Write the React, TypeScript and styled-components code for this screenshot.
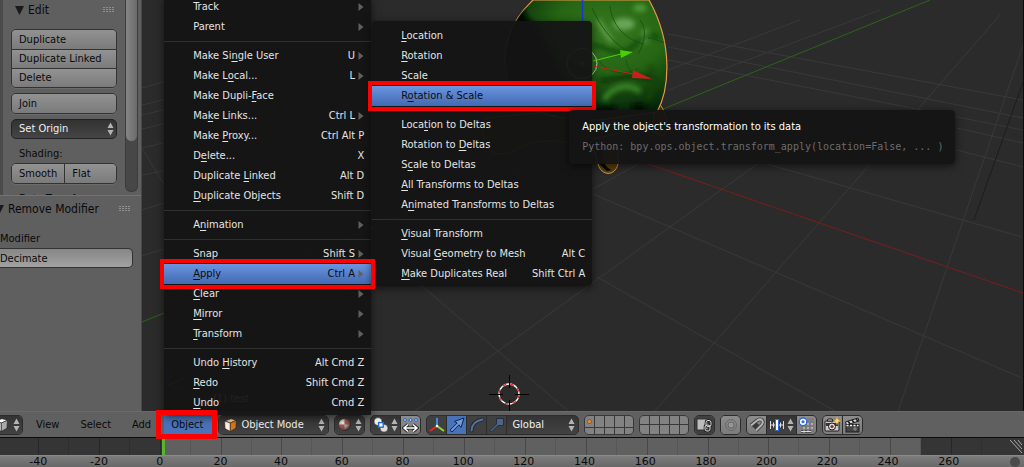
import React from "react";
import styled, { createGlobalStyle, css } from "styled-components";

const Global = createGlobalStyle`
  * { box-sizing: border-box; }
  body { margin: 0; background: #2b2b2b; }
  body, button, input, select {
    font-family: "DejaVu Sans Condensed", "DejaVu Sans", sans-serif;
    font-size: 11px;
    line-height: 14px;
  }
  button, input, select { margin: 0; padding: 0; border: 0; background: none; color: inherit; }
  svg { display: block; flex: none; }
`;

/* ---------- page frame ---------- */

const Page = styled.div`
  display: flex;
  flex-direction: column;
  min-height: 100vh;
  overflow: hidden;
`;

const Workspace = styled.div`
  flex: 1;
  display: flex;
  background: #2b2b2b;
`;

const Viewport = styled.main`
  flex: 1;
  position: relative;
  overflow: hidden;
  border-right: 1px solid #0c0c0c;
`;

const Scene = styled.svg`
  position: absolute;
  inset: 0;
  width: 100%;
  height: 100%;
`;

/* ---------- tool shelf ---------- */

const Shelf = styled.aside`
  width: 142px;
  display: flex;
  flex-direction: column;
  background: #5f5f5f;
  border-right: 1px solid #484848;
  color: #0a0a0a;
`;

const ShelfTop = styled.div`
  height: 195px;
  display: flex;
  overflow: hidden;
  border-left: 3px solid #4b4b4b;
`;

const ToolPanel = styled.section`
  flex: 1;
  padding: 2px 8px 0;
`;

const PanelTitle = styled.h2<{ $flush?: boolean }>`
  display: flex;
  align-items: center;
  gap: 4px;
  height: 16px;
  margin: 0;
  padding: ${(p) => (p.$flush ? "0 10px 0 0" : "0 2px 0 4px")};
  font-size: 12px;
  font-weight: 400;
  span { flex: 1; }
`;

const ButtonStack = styled.div<{ $row?: boolean }>`
  display: flex;
  flex-direction: ${(p) => (p.$row ? "row" : "column")};
  border: 1px solid #333;
  border-radius: 5px;
  overflow: hidden;
  box-shadow: 0 1px 0 #6c6c6c;
`;

const ToolButton = styled.button<{ $divided?: boolean }>`
  flex: 1;
  min-height: 19px;
  padding: 0 7px;
  text-align: left;
  background: linear-gradient(#929292, #7b7b7b);
  ${ButtonStack} > & + & {
    ${(p) => (p.$divided ? "border-left" : "border-top")}: 1px solid #333;
  }
`;

const ToolList = styled.div`
  display: flex;
  flex-direction: column;
  gap: 5px;
  padding-top: 11px;
`;

const MenuButton = styled.button`
  display: flex;
  align-items: center;
  justify-content: space-between;
  height: 20px;
  padding: 0 2px 0 7px;
  border: 1px solid #222;
  border-radius: 5px;
  background: linear-gradient(#323232, #454545);
  color: #f0f0f0;
`;

const Caption = styled.div`
  padding: 1px 8px 0;
  line-height: 18px;
`;

const Track = styled.div`
  width: 13px;
  height: 192px;
  margin-right: 3px;
  border: 1px solid #3c3c3c;
  border-top: 0;
  border-radius: 0 0 6px 6px;
  background: #474747;
`;

const Thumb = styled.div`
  height: 141px;
  border-radius: 0 0 6px 6px;
  background: linear-gradient(90deg, #858585, #6b6b6b);
`;

const ShelfBottom = styled.section`
  flex: 1;
  padding-top: 5px;
  border-top: 1px solid #747474;
`;

const Field = styled.label`
  display: block;
  margin-top: 13px;
  line-height: 18px;
`;

const TextInput = styled.input`
  display: block;
  width: 133px;
  height: 20px;
  border: 1px solid #333;
  border-left: 0;
  border-radius: 0 5px 5px 0;
  background: linear-gradient(#868686, #a2a2a2);
`;

/* ---------- header ---------- */

const Header = styled.header`
  position: relative;
  z-index: 2;
  display: flex;
  align-items: center;
  gap: 5px;
  height: 27px;
  border-top: 1px solid #6a6a6a;
  border-bottom: 1px solid #0c0c0c;
  background: #606060;
  color: #0a0a0a;
`;

const MenuBar = styled.nav`
  display: flex;
  gap: 5px;
  margin-right: 1px;
`;

const MenuAnchor = styled.div`
  position: relative;
  &::after {
    content: "";
    position: absolute;
    inset: -5px -5px -4px -8px;
    border: 5px solid #fe0000;
    pointer-events: none;
  }
`;

const BarButton = styled.button<{ $open?: boolean }>`
  display: block;
  height: 20px;
  padding: ${(p) => (p.$open ? "0 9px 0 7px" : "0 8px")};
  background: ${(p) => (p.$open ? "#4a72b8" : "none")};
`;

const Group = styled.div<{ $clipped?: boolean }>`
  display: flex;
  height: 20px;
  overflow: hidden;
  border: 1px solid #2c2c2c;
  border-radius: 5px;
  background: #2c2c2c;
  gap: 1px;
  ${(p) => p.$clipped && css`
    width: 23px;
    justify-content: flex-end;
    border-left: 0;
    border-radius: 0 5px 5px 0;
  `}
`;

const tones = {
  dark: "linear-gradient(#343434, #424242)",
  light: "linear-gradient(#8c8c8c, #7c7c7c)",
  flat: "#404040",
  active: "#4a72b8",
};

const IconButton = styled.button<{ $tone?: keyof typeof tones; $wide?: boolean }>`
  display: flex;
  flex: none;
  align-items: center;
  justify-content: ${(p) => (p.$wide ? "space-between" : "center")};
  width: ${(p) => (p.$wide ? "29px" : "19px")};
  padding: ${(p) => (p.$wide ? "0 2px" : "0")};
  background: ${(p) => tones[p.$tone ?? "dark"]};
`;

const SelectBox = styled.label<{ $width: number }>`
  display: flex;
  align-items: center;
  gap: 4px;
  width: ${(p) => p.$width}px;
  padding: 0 3px 0 5px;
  background: ${tones.dark};
  color: #f0f0f0;
`;

const Select = styled.select`
  appearance: none;
  flex: 1;
  min-width: 0;
  height: 18px;
`;

const Layers = styled.div`
  display: grid;
  grid-template-columns: repeat(5, 1fr);
  gap: 1px;
  width: 50px;
  height: 20px;
  overflow: hidden;
  border: 1px solid #383838;
  border-radius: 5px;
  background: #383838;
`;

const Layer = styled.button`
  display: flex;
  align-items: center;
  justify-content: center;
  background: #828282;
`;

/* ---------- menus ---------- */

const panel = css`
  position: absolute;
  background: rgba(20, 20, 20, 0.95);
  color: #e4e4e4;
  box-shadow: 0 2px 8px rgba(0, 0, 0, 0.6);
`;

const Menu = styled.div`
  ${panel}
  left: 0;
  bottom: 100%;
  width: 207px;
  padding-bottom: 2px;
`;

const SubMenu = styled.div`
  ${panel}
  left: calc(100% + 1px);
  bottom: -2px;
  width: 220px;
  padding: 5px 0 2px;
  border-radius: 4px;
`;

const Row = styled.div<{ $marked?: boolean }>`
  position: relative;
  ${(p) => p.$marked && css`
    z-index: 1;
    &::after {
      content: "";
      position: absolute;
      inset: -5px -4px;
      border: 4px solid #fe0000;
      pointer-events: none;
    }
  `}
`;

const MenuItem = styled.button<{ $active?: boolean }>`
  display: flex;
  align-items: center;
  width: 100%;
  height: 20px;
  padding: 0 7px 0 29px;
  white-space: nowrap;
  color: ${(p) => (p.$active ? "#0c0c0c" : "inherit")};
  background: ${(p) => (p.$active ? "linear-gradient(#6b95df, #4269b2)" : "none")};
  u {
    text-decoration-thickness: 1px;
    text-underline-offset: 2px;
    text-decoration-skip-ink: none;
  }
`;

const Shortcut = styled.span`
  margin-left: auto;
`;

const Divider = styled.hr`
  margin: 4px 0;
  border: 0;
  border-top: 1px solid #303030;
`;

const Tooltip = styled.div`
  ${panel}
  z-index: 2;
  left: 197px;
  top: 24px;
  width: 386px;
  padding: 7px 13px;
  border-radius: 4px;
  color: #fff;
  line-height: 20px;
  white-space: nowrap;
`;

const Code = styled.code`
  display: block;
  font-family: "DejaVu Sans Mono", monospace;
  font-size: 10px;
  line-height: 20px;
  color: #6c6c6c;
`;

/* ---------- timeline ---------- */

const Timeline = styled.footer`
  position: relative;
`;

const Graph = styled.div`
  display: grid;
  grid-template-columns: repeat(16, 1fr);
  height: 17px;
  padding: 0 42px 0 8px;
  background: linear-gradient(90deg, #353535 0 15.9%, #606060 15.9% 89.9%, #353535 89.9%);
`;

const Tick = styled.div`
  display: flex;
  border-right: 1px solid rgba(0, 0, 0, 0.1);
  &::before {
    content: "";
    width: 50%;
    border-right: 1px solid rgba(0, 0, 0, 0.25);
  }
`;

const Playhead = styled.div`
  position: absolute;
  left: 15.8%;
  top: 0;
  width: 3px;
  height: 17px;
  background: #55b52c;
`;

const Corner = styled.svg`
  position: absolute;
  right: 2px;
  top: 1px;
`;

const Ruler = styled.div`
  display: grid;
  grid-template-columns: repeat(16, 1fr);
  height: 12px;
  padding: 0 45px 0 8px;
  border-top: 1px solid #8a8a8a;
  background: linear-gradient(#7c7c7c, #686868);
  color: #0a0a0a;
  font-family: "DejaVu Sans", sans-serif;
  line-height: 11px;
  text-align: center;
`;

const RulerKnob = styled.div`
  position: absolute;
  right: 4px;
  bottom: 0;
  width: 10px;
  height: 10px;
  border-radius: 50%;
  background: #4a4a4a;
`;

/* ---------- icons ---------- */

const Arrows = () => (
  <svg width="7" height="14" viewBox="0 0 7 14" fill="#b4b4b4">
    <path d="M3.5 .5 6.5 6H.5zM3.5 13.5.5 8h6z" />
  </svg>
);

const Grip = () => (
  <svg width="12" height="6" viewBox="0 0 12 6">
    {[0, 3, 6, 9].map((x) => [0, 2, 4].map((y) => (
      <rect key={`${x}-${y}`} x={x} y={y} width="2" height="1" fill="#8f8f8f" />
    )))}
  </svg>
);

const Fold = () => (
  <svg width="9" height="9" viewBox="0 0 9 9"><path d="M0 0h9L4.5 9z" fill="#1a1a1a" /></svg>
);

const FoldHalf = () => (
  <svg width="4" height="9" viewBox="5 0 4 9"><path d="M0 0h9L4.5 9z" fill="#1a1a1a" /></svg>
);

const SubArrow = () => (
  <svg width="6" height="8" viewBox="0 0 6 8"><path d="M.5 0 5.5 4 .5 8z" fill="#606060" /></svg>
);

const Cube = ({ top, left, right }: { top: string; left: string; right: string }) => (
  <svg width="13" height="14" viewBox="0 0 13 14" stroke="#222" strokeWidth=".6" strokeLinejoin="round">
    <path d="M.6 3 7 .7l5.4 1.6L6.3 5z" fill={top} />
    <path d="M.6 3l5.7 2v8.4L1 10.6z" fill={left} />
    <path d="M6.3 5l6.1-2.7-.5 8-5.6 3.1z" fill={right} />
  </svg>
);

const Shading = () => (
  <svg width="15" height="15" viewBox="0 0 15 15">
    <defs>
      <radialGradient id="ball" cx=".35" cy=".35" r=".75">
        <stop offset="0" stopColor="#f4eeee" /><stop offset=".45" stopColor="#b9a39e" /><stop offset="1" stopColor="#3a2624" />
      </radialGradient>
    </defs>
    <circle cx="7.5" cy="7.5" r="6" fill="url(#ball)" stroke="#1c1c1c" strokeWidth=".6" />
    <path d="M7.500 1.500a6 6 0 0 1 6 6h-6zM7.500 7.500v6a6 6 0 0 1-6-6z" fill="#7c342c" opacity=".7" />
  </svg>
);

const Pivot = () => (
  <svg width="16" height="16" viewBox="0 0 16 16" stroke="#222" strokeWidth=".6">
    <circle cx="5" cy="4.6" r="4" fill="#eee" />
    <circle cx="11" cy="11.2" r="4" fill="#ddd" />
    <rect x="5.6" y="5.6" width="4.6" height="4.6" fill="#fff" stroke="#2469d8" strokeWidth="1.4" />
  </svg>
);

const PivotCenters = () => (
  <svg width="17" height="16" viewBox="0 0 17 16" fill="none">
    <path d="M3 1v4M1 3h4M8.500 1v4M6.500 3h4M14 1v4M12 3h4" stroke="#3c6fc4" strokeWidth="1.800" />
    <circle cx="3" cy="3" r=".7" fill="#fff" /><circle cx="8.500" cy="3" r=".7" fill="#fff" /><circle cx="14" cy="3" r=".7" fill="#fff" />
    <path d="M2 11h13M6 7.500 2 11l4 3.500M11 7.500l4 3.500-4 3.500" stroke="#222" strokeWidth="3.200" />
    <path d="M2 11h13M6 7.500 2 11l4 3.500M11 7.500l4 3.500-4 3.500" stroke="#fff" strokeWidth="1.500" />
  </svg>
);

const Axes = () => (
  <svg width="16" height="16" viewBox="0 0 16 16" fill="none" strokeWidth="2">
    <path d="M8 9V1" stroke="#3d8ee0" /><path d="M8 9 1 14" stroke="#e2281c" /><path d="M8 9l7 5" stroke="#9ad42a" />
    <circle cx="8" cy="9" r="1.300" fill="#fff" />
  </svg>
);

const Translate = () => (
  <svg width="16" height="16" viewBox="0 0 16 16">
    <path d="M1 13.200 8.200 6 5.500 4.400 15 1 12 10.500 10 7.800 3 15z" fill="#6f9be6" stroke="#142544" strokeLinejoin="round" />
  </svg>
);

const Rotate = () => (
  <svg width="16" height="16" viewBox="0 0 16 16" fill="none" strokeLinecap="round">
    <path d="M2.500 13.500C3 7 7 3.500 13.500 2.500" stroke="#1e2a3e" strokeWidth="4" />
    <path d="M2.500 13.500C3 7 7 3.500 13.500 2.500" stroke="#5a7299" strokeWidth="2" />
  </svg>
);

const Scale = () => (
  <svg width="16" height="16" viewBox="0 0 16 16">
    <path d="M1 13.500 7.500 7V1.500h7v7H9L2.500 15z" fill="#4e658a" stroke="#202c40" />
  </svg>
);

const LockView = () => (
  <svg width="17" height="16" viewBox="0 0 17 16" fill="none">
    <rect x="1" y="2" width="11" height="11" fill="#bdbdbd" stroke="#333" />
    <rect x="10" y="3.500" width="5" height="6" rx="2" stroke="#222" strokeWidth="2.600" />
    <rect x="9" y="8" width="5" height="6" rx="2" stroke="#222" strokeWidth="2.600" />
    <rect x="10" y="3.500" width="5" height="6" rx="2" stroke="#ddd" />
    <rect x="9" y="8" width="5" height="6" rx="2" stroke="#ddd" />
  </svg>
);

const Proportional = () => (
  <svg width="14" height="14" viewBox="0 0 14 14" fill="none">
    <circle cx="7" cy="7" r="5.500" stroke="#6a6a6a" /><circle cx="7" cy="7" r="3" fill="#979797" stroke="#666" />
  </svg>
);

const Magnet = () => (
  <svg width="16" height="16" viewBox="0 0 16 16" fill="none">
    <path d="M2 8.500 8 3.500c4.500-3 7.500 1 4.500 4.500L7 13.500M5 11l4-4" stroke="#3a3a3a" strokeWidth="3.600" />
    <path d="M2 8.500 8 3.500c4.500-3 7.500 1 4.500 4.500L7 13.500" stroke="#b4b4b4" strokeWidth="2" />
  </svg>
);

const SnapIncrement = () => (
  <svg width="16" height="16" viewBox="0 0 16 16" fill="none">
    <path d="M1.500 4v8M4.500 5.500v5M11.500 5.500v5M14.500 4v8M1 8h14" stroke="#ddd" />
    <rect x="6.500" y="2.500" width="3" height="11" fill="#fff" stroke="#2c6ae0" />
  </svg>
);

const SnapGrid = () => (
  <svg width="17" height="16" viewBox="0 0 17 16" fill="none">
    <path d="M6 3v13M10 1v14M14 1v14M3 7h13M3 11h13M3 14.500h10" stroke="#222" strokeWidth="2.200" />
    <path d="M6 3v13M10 1v14M14 1v14M3 7h13M3 11h13M3 14.500h10" stroke="#eee" strokeWidth=".9" />
    <circle cx="5" cy="4.800" r="3.800" fill="#fff" stroke="#2c6ae0" strokeWidth="1.300" />
    <circle cx="5" cy="4.800" r="1.500" fill="#2c6ae0" />
  </svg>
);

const Camera = () => (
  <svg width="17" height="16" viewBox="0 0 17 16">
    <rect x="1" y="4" width="14" height="10" rx="1" fill="#ccc" stroke="#1c1c1c" />
    <path d="M3 4l1-2h4l1 2z" fill="#ddd" stroke="#1c1c1c" />
    <rect x="2" y="6" width="12" height="3" fill="#333" />
    <circle cx="8" cy="9.500" r="3.500" fill="#ddd" stroke="#1c1c1c" /><circle cx="8" cy="9.500" r="1.600" fill="#803030" />
    <path d="M13 0l1 2.700L16.700 4 14 5l-1 2.700L12 5 9.300 4 12 2.700z" fill="#ffe070" stroke="#e0a010" strokeWidth=".5" />
  </svg>
);

const Clapper = () => (
  <svg width="17" height="16" viewBox="0 0 17 16">
    <path d="M1.500 5 14 1l1 3L2.500 8z" fill="#ddd" stroke="#1c1c1c" />
    <path d="M4 4.200l2 2.600M8 3l2 2.600M12 1.800l2 2.600" stroke="#1c1c1c" strokeWidth="1.600" />
    <rect x="2" y="7.500" width="13" height="7.500" fill="#444" stroke="#1c1c1c" />
    <path d="M2.500 8.500h12" stroke="#eee" strokeWidth="1.600" strokeDasharray="2 1.500" />
    <path d="M9 12h4M11 10v4" stroke="#999" strokeWidth=".8" />
  </svg>
);

/* ---------- 3D scene ---------- */

const gridLines = [
  "M593 194 1022 378", "M760 162 1022 237", "M597 277 835 411", "M415 411 760 162 830 112",
  "M655 411 872 162 1000 15", "M898 411 1023 45", "M593 189 640 163", "M957 150 1023 167",
  "M957 128 1023 143", "M957 117 1023 130", "M415 280 568 411", "M668 34 1023 100",
  "M668 47 1023 118", "M668 60 957 117", "M668 70 800 20", "M668 90 880 10",
  "M142 88 163 82", "M142 105 163 100", "M142 115 163 110", "M142 129 163 124", "M142 148 163 143",
  "M142 175 163 171", "M142 210 163 203", "M142 256 163 249", "M142 148 163 183",
];

const Model = () => (
  <g>
    <defs>
      <radialGradient id="skin" cx=".65" cy=".25" r=".7">
        <stop offset="0" stopColor="#36781f" /><stop offset=".5" stopColor="#256514" /><stop offset="1" stopColor="#06260a" />
      </radialGradient>
      <filter id="soft"><feGaussianBlur stdDeviation="2.500" /></filter>
      <clipPath id="head"><path d="M533 0C510 22 500 50 508 82 520 112 550 120 600 120L657 112C669 90 674 45 649 0z" /></clipPath>
    </defs>
    <path d="M486 118c-10 25 5 42 25 34 18-8 30-16 60-8l90-20-5-22z" fill="#2e260c" stroke="#d08a3c" />
    <path d="M594 150l4 14c3 12 17 13 20 0l1-16z" fill="#58410f" stroke="#e09a48" />
    <path d="M595 150l4 14 8 7 5-1c-8-3-10-11-9-20z" fill="#0a0804" />
    <path d="M655 100c12 8 16 30 8 36l-10-4z" fill="#4c390e" stroke="#e09a48" />
    <path d="M533 0C510 22 500 50 508 82 520 112 550 120 600 120L657 112C669 90 674 45 649 0z" fill="url(#skin)" stroke="#e89848" strokeWidth="1.200" />
    <g clipPath="url(#head)">
      <path d="M500 90C500 40 515 10 526 0 522 10 526 20 536 24L580 110z" fill="#020a02" filter="url(#soft)" />
      <g filter="url(#soft)" fill="none">
        <path d="M598 20c5 10 10 16 14 22" stroke="#69a555" strokeWidth="4" />
        <ellipse cx="624" cy="24" rx="11" ry="6" fill="#6ba557" />
        <ellipse cx="640" cy="8" rx="7" ry="4" fill="#4f9a38" />
        <ellipse cx="645" cy="36" rx="4" ry="8" fill="#489436" />
        <path d="M592 46c14-2 24 12 36 4s18-20 32-12" stroke="#0f3d0a" strokeWidth="3" />
        <path d="M604 100c8-14 26-18 36-8" stroke="#3c8a2a" strokeWidth="5" />
        <path d="M600 80c20 2 30-8 56 0" stroke="#0b2f08" strokeWidth="4" />
        <path d="M590 110h26M632 108h14" stroke="#021003" strokeWidth="8" />
        <path d="M650 66c4 14 2 24-2 34" stroke="#12440c" strokeWidth="4" />
      </g>
      <g fill="none" stroke="#174f0f" strokeWidth="1" opacity=".8">
        <path d="M592 8c8 18 20 34 34 42M610 6c2 20 16 34 34 38M640 20c8 10 4 24-2 34M648 38c8 0 14 6 20 4M600 62c8 12 30 14 38 6M626 60c2 14 16 20 34 20" />
      </g>
    </g>
  </g>
);

const Gizmo = () => (
  <g fill="none">
    <path d="M582.500 0v52" stroke="#1c37d8" strokeWidth="1.500" />
    <circle cx="582" cy="63.500" r="15" stroke="#c8c8c8" />
    <circle cx="582" cy="63.500" r="2" fill="#e08030" />
    <path d="M593 61l28-7" stroke="#48d80a" /><path d="M620 50l13 2-12 6z" fill="#4ad000" />
    <path d="M593 66l40 8" stroke="#c82020" /><path d="M633 70l19 9-20-1z" fill="#c8201c" />
  </g>
);

const SceneInfo = () => (
  <g fill="none">
    <path d="M168 385v-22" stroke="#2030ff" /><path d="M168 385l16-7" stroke="#30ff20" /><path d="M168 385l16 5" stroke="#ff2020" />
    <text x="213" y="402" fill="#fff">(1) test</text>
  </g>
);

const Cursor3D = () => (
  <g fill="none">
    <circle cx="509" cy="394" r="10" stroke="#fff" strokeWidth="1.300" />
    <circle cx="509" cy="394" r="10" stroke="#e03030" strokeWidth="1.300" strokeDasharray="4 4" />
    <path d="M509.500 375v13M509.500 400v11M489 394.500h14M515 394.500h14" stroke="#000" />
  </g>
);

/* ---------- menu data ---------- */

type Item = { label: string; keys?: string; sub?: boolean } | null;

const objectMenu: Item[] = [
  { label: "Track", sub: true },
  { label: "Parent", sub: true },
  null,
  { label: "Make Si_ngle User", keys: "U", sub: true },
  { label: "Make L_ocal...", keys: "L", sub: true },
  { label: "Make Dupli-_Face" },
  { label: "Ma_ke Links...", keys: "Ctrl L", sub: true },
  { label: "Make _Proxy...", keys: "Ctrl Alt P" },
  { label: "D_elete...", keys: "X" },
  { label: "Duplicate _Linked", keys: "Alt D" },
  { label: "_Duplicate Objects", keys: "Shift D" },
  null,
  { label: "A_nimation", sub: true },
  null,
  { label: "Snap", keys: "Shift S", sub: true },
  { label: "_Apply", keys: "Ctrl A", sub: true },
  { label: "_Clear", sub: true },
  { label: "_Mirror", sub: true },
  { label: "_Transform", sub: true },
  null,
  { label: "Undo _History", keys: "Alt Cmd Z" },
  { label: "_Redo", keys: "Shift Cmd Z" },
  { label: "_Undo", keys: "Cmd Z" },
];

const applyMenu: Item[] = [
  { label: "_Location" },
  { label: "_Rotation" },
  { label: "Scale" },
  { label: "R_otation & Scale" },
  null,
  { label: "Loca_tion to Deltas" },
  { label: "Rotation to _Deltas" },
  { label: "S_cale to Deltas" },
  { label: "_All Transforms to Deltas" },
  { label: "A_nimated Transforms to Deltas" },
  null,
  { label: "_Visual Transform" },
  { label: "Visual _Geometry to Mesh", keys: "Alt C" },
  { label: "_Make Duplicates Real", keys: "Shift Ctrl A" },
];

const Mnemonic = ({ text }: { text: string }) => {
  const at = text.indexOf("_");
  if (at < 0) return <span>{text}</span>;
  return <span>{text.slice(0, at)}<u>{text[at + 1]}</u>{text.slice(at + 2)}</span>;
};

const Items = ({ items, active, children }: { items: Item[]; active: string; children: React.ReactNode }) => (
  <>
    {items.map((item, i) => {
      if (!item) return <Divider key={i} />;
      const on = item.label === active;
      return (
        <Row key={i} $marked={on}>
          <MenuItem role="menuitem" $active={on}>
            <Mnemonic text={item.label} />
            <Shortcut>{item.keys}</Shortcut>
            {item.sub && <><span>&nbsp;</span><SubArrow /></>}
          </MenuItem>
          {on && children}
        </Row>
      );
    })}
  </>
);

const LayerGrid = ({ first, used }: { first: number; used?: boolean }) => (
  <Layers>
    {Array.from({ length: 10 }, (_, i) => (
      <Layer key={i} aria-label={`Layer ${first + i}`}>
        {used && i === 0 && <svg width="5" height="5"><circle cx="2.500" cy="2.500" r="2" fill="#f09030" stroke="#6a3a10" strokeWidth=".6" /></svg>}
      </Layer>
    ))}
  </Layers>
);

const frames = Array.from({ length: 16 }, (_, i) => i * 20 - 40);

export default function App() {
  return (
    <Page>
      <Global />
      <Workspace>
        <Shelf>
          <ShelfTop>
            <ToolPanel>
              <PanelTitle><Fold /><span>Edit</span><Grip /></PanelTitle>
              <ToolList>
                <ButtonStack>
                  <ToolButton>Duplicate</ToolButton>
                  <ToolButton>Duplicate Linked</ToolButton>
                  <ToolButton>Delete</ToolButton>
                </ButtonStack>
                <ButtonStack><ToolButton>Join</ToolButton></ButtonStack>
                <MenuButton>Set Origin<Arrows /></MenuButton>
                <div>
                  <Caption>Shading:</Caption>
                  <ButtonStack $row>
                    <ToolButton $divided>Smooth</ToolButton>
                    <ToolButton $divided>Flat</ToolButton>
                  </ButtonStack>
                </div>
                <Caption>Data Transfer:</Caption>
              </ToolList>
            </ToolPanel>
            <Track><Thumb /></Track>
          </ShelfTop>
          <ShelfBottom>
            <PanelTitle $flush><FoldHalf /><span>Remove Modifier</span><Grip /></PanelTitle>
            <Field>
              Modifier
              <TextInput type="text" defaultValue="Decimate" />
            </Field>
          </ShelfBottom>
        </Shelf>
        <Viewport>
          <Scene viewBox="142 0 881 411" preserveAspectRatio="xMidYMid slice">
            <path d={gridLines.join("")} stroke="#393939" fill="none" />
            <path d="M974 220 1023 82" stroke="#1d1d1d" />
            <path d="M590 144 1023 293" stroke="#7c1c1c" />
            <path d="M142 322 930 0" stroke="#2c6418" />
            <Model />
            <Gizmo />
            <SceneInfo />
            <Cursor3D />
          </Scene>
        </Viewport>
      </Workspace>

      <Header>
        <Group $clipped>
          <IconButton aria-label="Editor type" $wide>
            <Cube top="#fff" left="#ddd" right="#aaa" /><Arrows />
          </IconButton>
        </Group>
        <MenuBar>
          <BarButton>View</BarButton>
          <BarButton>Select</BarButton>
          <BarButton>Add</BarButton>
          <MenuAnchor>
            <Menu role="menu">
              <Items items={objectMenu} active="_Apply">
                <SubMenu role="menu">
                  <Items items={applyMenu} active="R_otation & Scale">
                    <Tooltip role="tooltip">
                      Apply the object's transformation to its data
                      <Code>Python: bpy.ops.object.transform_apply(location=False, ... )</Code>
                    </Tooltip>
                  </Items>
                </SubMenu>
              </Items>
            </Menu>
            <BarButton $open>Object</BarButton>
          </MenuAnchor>
        </MenuBar>
        <Group>
          <SelectBox $width={109}>
            <Cube top="#f8c890" left="#fff0e0" right="#d07820" />
            <Select aria-label="Mode"><option>Object Mode</option></Select>
            <Arrows />
          </SelectBox>
        </Group>
        <Group>
          <IconButton aria-label="Viewport shading" $wide><Shading /><Arrows /></IconButton>
        </Group>
        <Group>
          <IconButton aria-label="Pivot point" $wide><Pivot /><Arrows /></IconButton>
          <IconButton aria-label="Manipulate centers" $tone="light"><PivotCenters /></IconButton>
        </Group>
        <Group>
          <IconButton aria-label="Show manipulator" $tone="flat"><Axes /></IconButton>
          <IconButton aria-label="Translate" $tone="active"><Translate /></IconButton>
          <IconButton aria-label="Rotate" $tone="flat"><Rotate /></IconButton>
          <IconButton aria-label="Scale" $tone="flat"><Scale /></IconButton>
          <SelectBox $width={71}>
            <Select aria-label="Transform orientation"><option>Global</option></Select>
            <Arrows />
          </SelectBox>
        </Group>
        <LayerGrid first={1} used />
        <LayerGrid first={11} />
        <Group><IconButton aria-label="Lock to scene" $tone="flat"><LockView /></IconButton></Group>
        <Group><IconButton aria-label="Proportional editing" $tone="light"><Proportional /></IconButton></Group>
        <Group>
          <IconButton aria-label="Snap" $tone="light"><Magnet /></IconButton>
          <IconButton aria-label="Snap element" $wide><SnapIncrement /><Arrows /></IconButton>
          <IconButton aria-label="Snap to grid" $tone="light"><SnapGrid /></IconButton>
        </Group>
        <Group>
          <IconButton aria-label="Render image" $tone="light"><Camera /></IconButton>
          <IconButton aria-label="Render animation" $tone="light"><Clapper /></IconButton>
        </Group>
      </Header>

      <Timeline>
        <Graph>{frames.map((f) => <Tick key={f} />)}</Graph>
        <Playhead />
        <Corner width="12" height="14" viewBox="0 0 12 14" stroke="#aaa">
          <path d="M0 1l12 13M4 1l8 9M8 1l4 5" />
        </Corner>
        <Ruler>{frames.map((f) => <span key={f}>{f}</span>)}</Ruler>
        <RulerKnob />
      </Timeline>
    </Page>
  );
}
